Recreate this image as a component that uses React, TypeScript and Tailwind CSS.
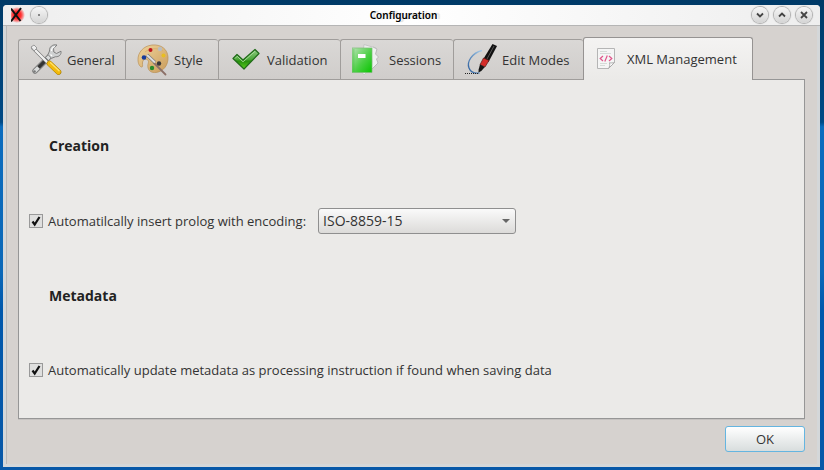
import type { ReactNode } from "react";

function ToolsIcon() {
  return (
    <svg viewBox="0 0 32 32" className="size-8 shrink-0" aria-hidden="true">
      <path d="M21 11 5 27" stroke="#777" strokeWidth="5.400" strokeLinecap="round" />
      <path d="M21 11 5 27" stroke="#d9dbdb" strokeWidth="3.800" strokeLinecap="round" />
      <path d="M17 15 8.500 23.500" stroke="#333" strokeWidth="3.600" />
      <path d="M27 1c-4.500-1-8 2-7.500 6L18 10.500l3.500 3.800 4-1.600c3.500.3 6-2 5.500-5.500l-4.500 2.300-2.700-1.500-.2-3.500z" fill="#cfd1d1" stroke="#777" strokeWidth=".9" />
      <path d="M21.500 7c0-2.500 1.300-4 3.500-4.500M20.500 10.500l1.500 1.500" stroke="#fff" strokeWidth="1.200" fill="none" />
      <circle cx="4.500" cy="27.500" r="1.300" fill="#777" />
      <path d="m3 4 15 15" stroke="#777" strokeWidth="3.600" strokeLinecap="round" />
      <path d="m3 4 15 15" stroke="#f0f0ef" strokeWidth="2.400" strokeLinecap="round" />
      <path d="m1 3 3-2 3 3-3 3z" fill="#eee" stroke="#888" strokeWidth=".8" />
      <path d="m19.500 19.500 9 8.500" stroke="#a37a00" strokeWidth="5.600" strokeLinecap="round" />
      <path d="m19.500 19.500 9 8.500" stroke="#f2b90c" strokeWidth="4.600" strokeLinecap="round" />
      <path d="m20.500 18.800 8.500 8" stroke="#ffe16b" strokeWidth="1.300" strokeLinecap="round" />
    </svg>
  );
}

function PaletteIcon() {
  return (
    <svg viewBox="0 0 32 32" className="size-8 shrink-0" aria-hidden="true">
      <defs>
        <linearGradient id="wood" x1="0" y1="0" x2="1" y2="1">
          <stop offset="0" stopColor="#f0d49c" />
          <stop offset="1" stopColor="#c99c5c" />
        </linearGradient>
      </defs>
      <path d="M15 1C6 2 .8 9 1 15.500c0 4 1.500 7 3.500 7.500 1.500.3 1-2 1-4 0-3 2.300-4.500 4.500-3.500 3 1.500 .5 4 .8 7 .3 4 3.200 6.500 8.200 6C26.500 27.500 31.500 21 31 13 30.500 5 24 .2 15 1z" fill="url(#wood)" stroke="#b98f55" strokeWidth=".7" />
      <path d="M8 8c5-4 12-4.500 18-1M13 25c5-2 11-5 15-10M12 21l13-6" stroke="#d5ad6c" strokeWidth=".8" fill="none" />
      <path d="m17 19 11.500 11.500" stroke="#8c7068" strokeWidth="1.800" strokeLinecap="round" />
      <path d="m10 11 8 7.500" stroke="#777" strokeWidth="3.200" />
      <path d="m10 11 8 7.500" stroke="#dedede" strokeWidth="2" />
      <circle cx="13.500" cy="6" r="2" fill="#c0141c" />
      <circle cx="23" cy="5" r="2.200" fill="#b9bdc0" />
      <circle cx="26.500" cy="11.500" r="2" fill="#e8be20" />
      <circle cx="7" cy="13.500" r="2.300" fill="#173b9a" />
      <circle cx="22" cy="19.500" r="2.200" fill="#37373a" />
      <circle cx="15" cy="24" r="2.200" fill="#278b2b" />
    </svg>
  );
}

function CheckIcon() {
  return (
    <svg viewBox="0 0 32 32" className="size-8 shrink-0" aria-hidden="true">
      <defs>
        <linearGradient id="leaf" x1="0" y1="0" x2="0" y2="1">
          <stop offset="0" stopColor="#8fca83" />
          <stop offset=".5" stopColor="#4da83b" />
          <stop offset=".6" stopColor="#27900e" />
          <stop offset="1" stopColor="#5bd21e" />
        </linearGradient>
      </defs>
      <path d="m3 14.500 4-4 6 5.500L25 5.500l4 4L14 25z" fill="url(#leaf)" stroke="#216b1a" strokeWidth="1.200" strokeLinejoin="round" />
      <path d="m5 14.500 2.200-2.200 5.800 5.500L25 7.300" fill="none" stroke="#b8e5a9" strokeWidth=".8" />
    </svg>
  );
}

function SessionsIcon() {
  return (
    <svg viewBox="0 0 32 32" className="size-8 shrink-0" aria-hidden="true">
      <defs>
        <linearGradient id="book" x1="0" y1="0" x2="1" y2="1">
          <stop offset="0" stopColor="#b9e2b6" />
          <stop offset=".55" stopColor="#4bd044" />
          <stop offset="1" stopColor="#08c400" />
        </linearGradient>
      </defs>
      <path d="m12 .5 12 3.500-5 20-7 7-3-4z" fill="#ededed" stroke="#c5c5c5" />
      <path d="m21 3 4 2-1.500 5 3 3-2 2 1.500 4-6 6" fill="#f0f0f0" stroke="#b5b5b5" strokeWidth=".9" />
      <path d="M0 4h20v24.500H0z" fill="url(#book)" stroke="#79bd74" strokeWidth=".7" />
      <path d="M.5 5h2v23h-2z" fill="#36be30" opacity=".3" />
      <path d="M6 10h7.500v4H6z" fill="#fff" />
    </svg>
  );
}

function PenIcon() {
  return (
    <svg viewBox="0 0 32 32" className="size-8 shrink-0" aria-hidden="true">
      <defs>
        <linearGradient id="ink" x1="1" y1="0" x2="0" y2="1">
          <stop offset="0" stopColor="#a9cdea" />
          <stop offset="1" stopColor="#285b9b" />
        </linearGradient>
      </defs>
      <path d="M17 6.500C7 9 1.500 18 4 24c1.500 4 5.500 5.500 10.500 5" fill="none" stroke="url(#ink)" strokeWidth="1.300" />
      <path d="M0 29.500h14" stroke="#222" strokeWidth="1" strokeDasharray="1 1" />
      <path d="m27.500 0 4.500 2-8.500 16-5.500-2.500z" fill="#111" />
      <path d="m29 2-7 13" stroke="#666" strokeWidth=".8" />
      <path d="m18.500 14 5.500 2.500-4 6.500-5-2.300z" fill="#d42c29" stroke="#551b1a" strokeWidth=".7" />
      <path d="m15 20.500 4.800 2.400-3.500 4-2.800 1.600.2-3.300z" fill="#151515" />
    </svg>
  );
}

function XmlIcon() {
  return (
    <svg viewBox="0 0 32 32" className="size-8 shrink-0" aria-hidden="true">
      <path d="M7.500 5.500h17v14l-6 6h-11z" fill="#f5f5f5" stroke="#b5b5b5" />
      <path d="M24.500 19.500c-2 .7-3.500.5-5 .2.500 2 .3 4-1 5.800z" fill="#fff" stroke="#aaa" />
      <path d="M10 8.500h7M10 10.500h11M10 20.500h7M10 22.500h5" stroke="#d5dcd8" strokeWidth="1" />
      <path d="m13 13-2.800 2.500L13 18m6-5 2.800 2.500L19 18m-1.700-5.500-2.500 6" fill="none" stroke="#e0558a" strokeWidth="1.200" />
    </svg>
  );
}

const TABS: { label: string; icon: ReactNode; width: string }[] = [
  { label: "General", icon: <ToolsIcon />, width: "w-[107px]" },
  { label: "Style", icon: <PaletteIcon />, width: "w-[93px]" },
  { label: "Validation", icon: <CheckIcon />, width: "w-[122px]" },
  { label: "Sessions", icon: <SessionsIcon />, width: "w-[113px]" },
  { label: "Edit Modes", icon: <PenIcon />, width: "w-[130px]" },
];

function WindowButton({ label, children }: { label: string; children: ReactNode }) {
  return (
    <button
      type="button"
      aria-label={label}
      className="flex size-4 items-center justify-center rounded-full bg-linear-to-b from-[#f6f6f6] to-[#d4d4d4] shadow-[0_0_1px_1px_#aaaaaa]"
    >
      <svg viewBox="0 0 16 16" className="size-4" fill="none" stroke="#444" strokeWidth="1.800">
        {children}
      </svg>
    </button>
  );
}

function Tick({ id, label }: { id: string; label: string }) {
  return (
    <div className="flex items-center gap-[5px]">
      <span className="grid size-[14px] shrink-0">
        <input
          id={id}
          type="checkbox"
          defaultChecked
          className="peer col-start-1 row-start-1 size-[14px] appearance-none border border-[#999] bg-[#dfdfde]"
        />
        <svg
          viewBox="0 0 14 14"
          className="pointer-events-none invisible col-start-1 row-start-1 size-[14px] peer-checked:visible"
          fill="none"
          stroke="#111"
          strokeWidth="2.200"
          aria-hidden="true"
        >
          <path d="m3.500 7.500 2.200 3L10.500 3" />
        </svg>
      </span>
      <label htmlFor={id}>{label}</label>
    </div>
  );
}

export default function App() {
  return (
    <div className="flex min-h-screen bg-[linear-gradient(to_right,#003a67_0%,transparent_1%,transparent_99%,#003a78_100%),linear-gradient(to_bottom,#003a67_0%,#004a86_26%,#0a74cc_27%,#0a70c4_66%,#0058ac_68%,#0758a8_100%)] font-['Open_Sans',sans-serif] text-[13px] leading-5 text-[#333]">
      <div className="flex flex-1 bg-[linear-gradient(to_bottom,#003a67_0%,#004a86_26%,#0a6cbe_27%,#0a68b8_58%,#0058ac_66%,#0758a8_100%)] pt-[5px] pr-1 pb-[3px] pl-[3px]">
        <div className="flex flex-1 flex-col rounded-t-[4px] border-x-[3px] border-b-[3px] border-[#d4d7d9] bg-[#d6d2cf]">
          <header className="-mx-[3px] grid h-[21px] grid-cols-[1fr_auto_1fr] items-center rounded-t-[4px] border-b border-[#b5b5b5] bg-linear-to-r from-[#eeeeee] via-white to-[#eeeeee] px-2">
            <div className="flex items-center gap-1">
              <svg viewBox="0 0 16 16" className="size-4" aria-hidden="true">
                <defs>
                  <radialGradient id="glow">
                    <stop offset="0" stopColor="#ff1010" />
                    <stop offset=".5" stopColor="#ff3030" />
                    <stop offset="1" stopColor="#ff1010" stopOpacity="0" />
                  </radialGradient>
                </defs>
                <circle cx="6" cy="8" r="8" fill="url(#glow)" />
                <path d="M0 1.500 9.500 14M10 1 0 14.500" stroke="#111" strokeWidth="2" />
              </svg>
              <WindowButton label="Window menu">
                <circle cx="8" cy="8" r=".5" strokeWidth="1" />
              </WindowButton>
            </div>
            <h1 className="mr-4 font-['Noto_Sans',sans-serif] text-[10px] leading-4 font-semibold text-black [text-shadow:3px_0_1px_#dddddd]">Configuration</h1>
            <div className="flex justify-end gap-[6px]">
              <WindowButton label="Minimize">
                <path d="m5 6.500 3 3 3-3" />
              </WindowButton>
              <WindowButton label="Maximize">
                <path d="m5 9.500 3-3 3 3" />
              </WindowButton>
              <WindowButton label="Close">
                <path d="m5 5 6 6m0-6-6 6" />
              </WindowButton>
            </div>
          </header>

          <main className="flex flex-1 flex-col border-l border-[#b9b9b9] pt-[11px] pr-3 pb-3 pl-[11px]">
            <div role="tablist" className="z-10 -mb-px flex items-end">
              {TABS.map((tab) => (
                <button
                  key={tab.label}
                  type="button"
                  role="tab"
                  aria-selected={false}
                  className={`${tab.width} flex h-[41px] items-center gap-[5px] rounded-t-[3px] border border-r-0 border-[#a09d9b] bg-linear-to-b from-[#dad8d6] to-[#d0cdcb] pl-[11px] whitespace-nowrap`}
                >
                  {tab.icon}
                  {tab.label}
                </button>
              ))}
              <button
                type="button"
                role="tab"
                aria-selected={true}
                className="flex h-[43px] w-[170px] items-center gap-[5px] rounded-t-[3px] border border-b-0 border-[#969392] bg-linear-to-b from-[#f4f3f2] to-[#ebeae8] pl-[6px] whitespace-nowrap"
              >
                <XmlIcon />
                XML Management
              </button>
            </div>

            <section role="tabpanel" className="flex-1 border border-[#969696] bg-[#ebeae8] px-[10px] pt-14 pb-7 shadow-[0_1px_0_#c5c2c0]">
              <h2 className="pl-5 text-[14px] leading-5 font-bold text-[#222]">Creation</h2>
              <div className="mt-[52px] flex items-center gap-3">
                <Tick id="prolog" label="Automatilcally insert prolog with encoding:" />
                <div className="grid w-[198px] items-center">
                  <select
                    aria-label="Encoding"
                    className="col-start-1 row-start-1 h-[26px] appearance-none rounded-[3px] border border-[#8f8f8f] bg-linear-to-b from-[#fafafa] to-[#dcdbd9] pl-1 text-[14px]"
                  >
                    <option>ISO-8859-15</option>
                  </select>
                  <svg viewBox="0 0 8 4" className="pointer-events-none col-start-1 row-start-1 mr-[6px] h-1 w-2 justify-self-end" aria-hidden="true">
                    <path d="M0 0h8L4 4z" fill="#666" />
                  </svg>
                </div>
              </div>
              <h2 className="mt-[52px] pl-5 text-[14px] leading-5 font-bold text-[#222]">Metadata</h2>
              <div className="mt-[54px]">
                <Tick id="metadata" label="Automatically update metadata as processing instruction if found when saving data" />
              </div>
            </section>

            <footer className="mt-[7px] flex justify-end">
              <button
                type="button"
                className="h-[26px] w-20 rounded-[3px] border border-[#65b5e0] bg-linear-to-b from-white to-[#d8dddd]"
              >
                OK
              </button>
            </footer>
          </main>
        </div>
      </div>
    </div>
  );
}
